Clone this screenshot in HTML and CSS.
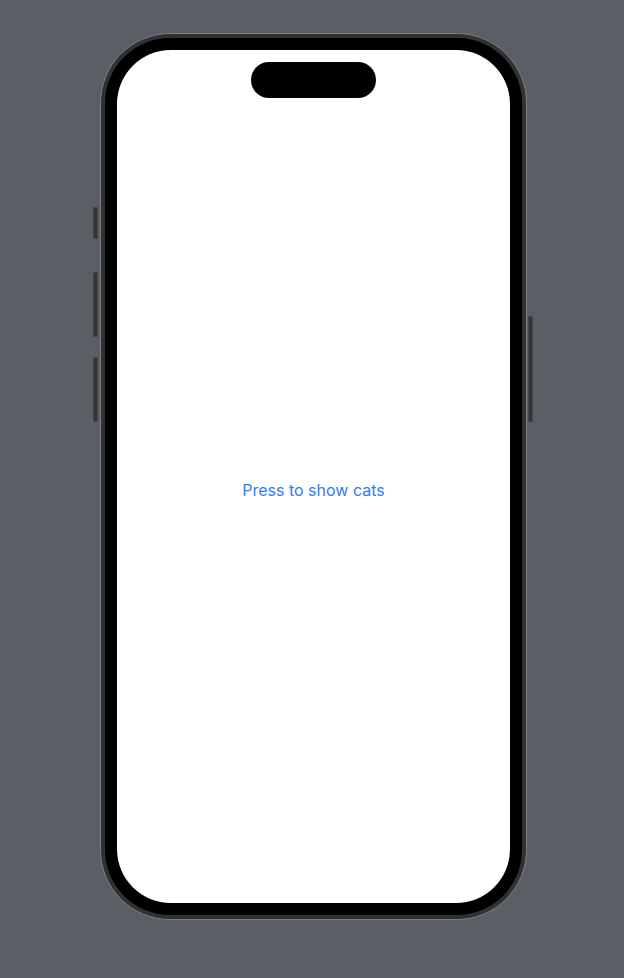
FILE: index.html
```html
<!DOCTYPE html>
<html lang="en">
<head>
<meta charset="utf-8">
<title>Cats</title>
<link rel="stylesheet" href="styles.css">
</head>
<body>
<div class="stage">
  <div class="phone">
    <span class="btn btn-action"></span>
    <span class="btn btn-volup"></span>
    <span class="btn btn-voldown"></span>
    <span class="btn btn-power"></span>
    <div class="bezel">
      <div class="screen">
        <div class="island"></div>
        <div class="content">
          <button class="link-btn" type="button">Press to show cats</button>
        </div>
      </div>
    </div>
  </div>
</div>
</body>
</html>
```

FILE: styles.css
```css
html, body {
  margin: 0;
  padding: 0;
  background: #5a5e65;
  height: 100%;
}

.stage {
  padding: 33px 0 0 100px;
}

.phone {
  position: relative;
  box-sizing: border-box;
  width: 427px;
  height: 887px;
  border-radius: 70px;
  border: 1px solid #7c7f84;
  background: #303133;
  padding: 4px;
}

.bezel {
  box-sizing: border-box;
  height: 100%;
  border-radius: 65px;
  background: #000;
  padding: 12px;
}

.screen {
  position: relative;
  box-sizing: border-box;
  height: 100%;
  border-radius: 54px;
  background: #fff;
  padding: 60px 0 34px;
  display: flex;
  flex-direction: column;
}

.island {
  position: absolute;
  top: 12px;
  left: 50%;
  width: 125px;
  height: 36px;
  margin-left: -63px;
  border-radius: 18px;
  background: #000;
}

.content {
  flex: 1;
  display: flex;
  align-items: center;
  justify-content: center;
}

.link-btn {
  border: 0;
  background: none;
  padding: 0;
  font-family: Inter, "Liberation Sans", sans-serif;
  font-size: 16px;
  color: #2f7cf6;
  cursor: pointer;
}

.btn {
  position: absolute;
  box-sizing: border-box;
  width: 5px;
  background: #333437;
  border: 1px solid #45474b;
}

.btn-action { left: -8px; top: 173px; height: 32px; }
.btn-volup { left: -8px; top: 238px; height: 65px; }
.btn-voldown { left: -8px; top: 323px; height: 65px; }
.btn-power { right: -7px; top: 282px; height: 106px; }
```
